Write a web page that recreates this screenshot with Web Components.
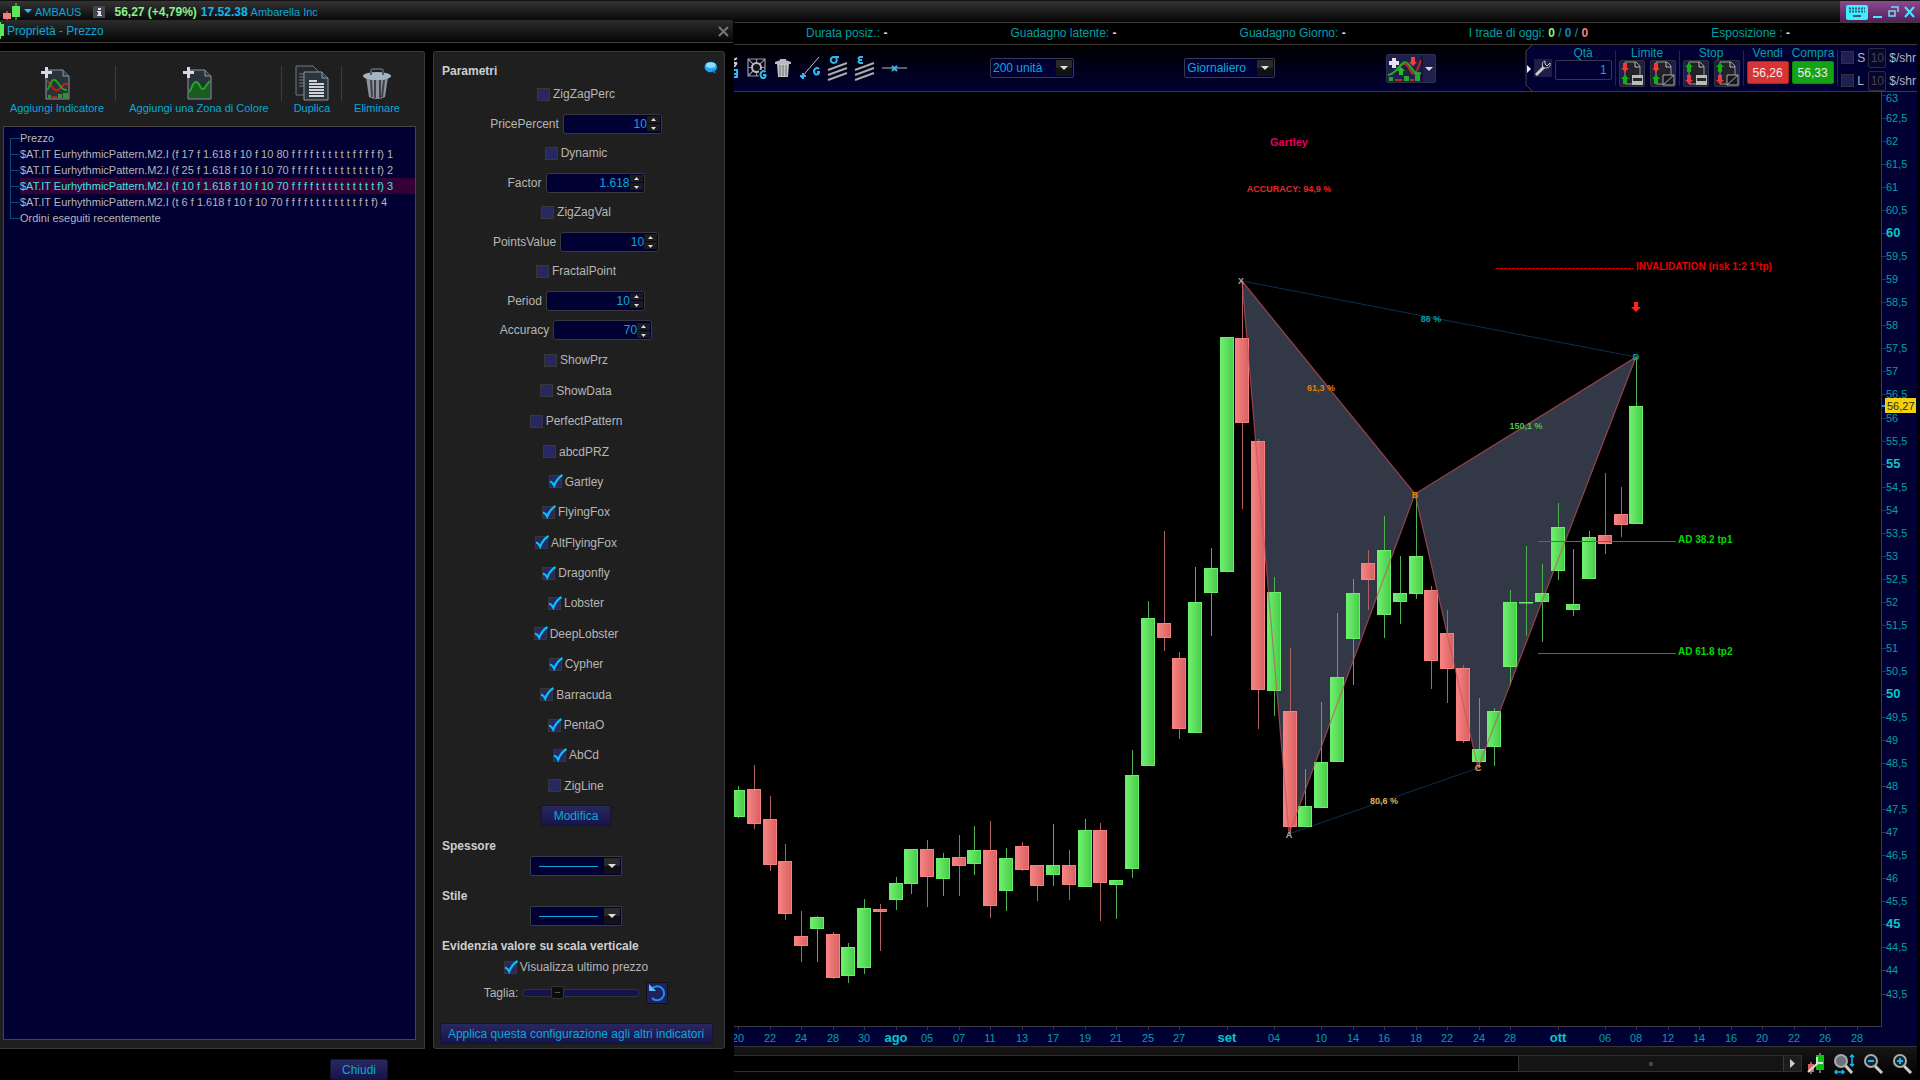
<!DOCTYPE html>
<html lang="it">
<head>
<meta charset="utf-8">
<title>AMBAUS - Ambarella Inc</title>
<style>
  :root {
    --navy: #000033;
    --panel: #1f1f1f;
    --line: #3a3a3a;
    --link: #08a8dc;
    --teal: #00a0a8;
    --grey: #b6b6b6;
  }

  body {
    margin: 0;
    min-height: 100vh;
    display: flex;
    flex-direction: column;
    background: #000;
    color: var(--grey);
    font: 11px/16px "Liberation Sans", Arial, sans-serif;
  }

  main {
    flex: 1;
    display: grid;
    grid-template-columns: 734px minmax(0, 1fr);
    padding-right: 3px;
  }
</style>
</head>
<body>
<title-bar></title-bar>
<main>
  <props-dialog></props-dialog>
  <chart-window></chart-window>
</main>

<script>
class BaseElement extends HTMLElement {
  connectedCallback() {
    if (this.shadowRoot) return;
    const template = document.createElement("template");
    template.innerHTML = `<style>
      *, *::before { box-sizing: border-box; }
      button, input, select { font: inherit; margin: 0; }
      svg { display: block; }
      ${this.styleTemplate}</style>${this.markup}`;
    this.attachShadow({ mode: "open" }).append(template.content.cloneNode(true));
  }

  get styleTemplate() { return ""; }
  get markup() { return ""; }
}

class TitleBar extends BaseElement {
  get styleTemplate() {
    return `
      :host {
        display: flex;
        align-items: center;
        height: 23px;
        border-top: 1px solid #111;
        border-bottom: 1px solid #3c3c3c;
        background: linear-gradient(#343434, #050505);
        color: var(--link);
        box-sizing: border-box;
      }
      .logo { margin: 0 4px 0 2px; }
      .symbol { margin: 0 12px 0 3px; }
      .info { margin-right: 9px; }
      b { font-size: 12px; }
      .quote { color: #8cf08c; margin-right: 4px; }
      .time { color: #10b8f0; margin-right: 3px; }
      .controls {
        margin-left: auto;
        display: flex;
        align-items: center;
        align-self: stretch;
        gap: 5px;
        padding: 0 5px 0 6px;
        background: linear-gradient(#8a4a8e, #54205c);
      }
      button { border: 0; padding: 0; background: none; }
    `;
  }
  get markup() {
    return `
      <svg class="logo" width="18" height="18" viewBox="0 0 18 18">
        <path d="M5 8v10" stroke="#c88"/>
        <path d="M14 0v17" stroke="#5e5"/>
        <path d="M1 10h8v6H1z" fill="#f08080"/>
        <path d="M10 3h8v11h-8z" fill="#5ce65c"/>
      </svg>
      <svg width="8" height="5" viewBox="0 0 8 5"><path d="M0 0h8L4 4z" fill="#20c8ff"/></svg>
      <span class="symbol">AMBAUS</span>
      <svg class="info" width="12" height="13" viewBox="0 0 12 13">
        <path d="M0 1h12v12H0z" fill="#445"/>
        <path d="M5 3h3v2H5zM4 6h4v4h1v1H4v-1h1V7H4z" fill="#ddd"/>
      </svg>
      <b class="quote">56,27 (+4,79%)</b>
      <b class="time">17.52.38</b>
      <span>Ambarella Inc</span>
      <div class="controls">
        <button aria-label="Tastiera"><svg width="22" height="16" viewBox="0 0 22 16">
          <rect y="1" width="22" height="15" rx="2" fill="#3cf0ff"/>
          <path d="M3 4.500h16M3 7.500h16" stroke="#3b5a78" stroke-width="2" stroke-dasharray="2 1"/>
          <path d="M7 12h8" stroke="#3b5a78" stroke-width="2"/>
        </svg></button>
        <button aria-label="Riduci"><svg width="10" height="14" viewBox="0 0 10 14"><path d="M0 11h9v2H0z" fill="#3cf0ff"/></svg></button>
        <button aria-label="Ripristina"><svg width="11" height="12" viewBox="0 0 11 12">
          <path d="M4 1h6v5M3 1h7M1 5h6v5H1z" fill="none" stroke="#6fe0f0" stroke-width="1.500"/>
        </svg></button>
        <button aria-label="Chiudi"><svg width="11" height="12" viewBox="0 0 11 12"><path d="M1 1l9 10M10 1L1 11" stroke="#3cf0ff" stroke-width="2"/></svg></button>
      </div>
    `;
  }
}

class DropDown extends BaseElement {
  get styleTemplate() {
    return `
      :host { display: inline-grid; height: 20px; font-size: 12px; }
      select, svg { grid-area: 1 / 1; }
      select {
        appearance: none;
        width: 100%;
        height: 20px;
        padding: 0 18px 0 2px;
        border: 1px solid #3a3a4a;
        border-radius: 2px;
        background: var(--navy);
        color: var(--link);
        outline: 0;
      }
      select.stroke { background: linear-gradient(#08a8dc, #08a8dc) 8px 9px / 59px 1px no-repeat var(--navy); }
      svg { justify-self: end; margin: 2px; pointer-events: none; }
    `;
  }
  get markup() {
    const text = this.getAttribute("value") || "";
    return `
      <select aria-label="${this.getAttribute("label")}" class="${text ? "" : "stroke"}">
        <option aria-label="${text || "Linea continua"}">${text}</option>
      </select>
      <svg width="16" height="16" viewBox="0 0 16 16">
        <path d="M0 0h16v16H0z" fill="#2a2a2a"/>
        <path d="M0 8h16v8H0z" fill="#121212"/>
        <path d="M4 6h8l-4 4z" fill="#ddd"/>
      </svg>
    `;
  }
}

class ParamCheck extends BaseElement {
  get styleTemplate() {
    return `
      :host { display: block; }
      label {
        display: flex;
        align-items: center;
        justify-content: center;
        gap: 3px;
        height: 20px;
      }
      .box { display: grid; }
      .box > * { grid-area: 1 / 1; }
      input {
        appearance: none;
        width: 13px;
        height: 13px;
        border: 1px solid #383838;
        background: #282860;
      }
      svg { display: none; overflow: visible; pointer-events: none; }
      input:checked + svg { display: block; }
    `;
  }
  get markup() {
    return `
      <label>
        <span class="box">
          <input type="checkbox" ${this.hasAttribute("checked") ? "checked" : ""}>
          <svg width="13" height="13" viewBox="0 0 13 13">
            <path d="M1 6.500C3 7 4 8 5.200 10.500C7 6 10 2 13.500 0" fill="none" stroke="#08c0ff" stroke-width="2.200"/>
          </svg>
        </span>
        <slot></slot>
      </label>
    `;
  }
}

class ParamSpin extends BaseElement {
  get styleTemplate() {
    return `
      :host { display: flex; align-items: center; justify-content: center; gap: 4px; height: 20px; }
      .field {
        display: flex;
        align-items: center;
        width: 99px;
        height: 20px;
        padding: 1px;
        border: 1px solid #38383e;
        border-radius: 3px;
        background: var(--navy);
      }
      input {
        flex: 1;
        min-width: 0;
        padding: 0;
        border: 0;
        outline: 0;
        background: none;
        color: var(--link);
        text-align: right;
      }
      .arrows { display: grid; gap: 1px; }
      button { display: block; padding: 0; border: 0; background: #1c1c1c; }
    `;
  }
  get markup() {
    return `
      <label for="value">${this.getAttribute("label")}</label>
      <div class="field">
        <input id="value" inputmode="decimal" value="${this.getAttribute("value")}">
        <div class="arrows">
          <button aria-label="Aumenta"><svg width="13" height="7" viewBox="0 0 13 7"><path d="M4 5h5L6.500 2z" fill="#ddd"/></svg></button>
          <button aria-label="Diminuisci"><svg width="13" height="7" viewBox="0 0 13 7"><path d="M4 3h5L6.500 6z" fill="#ddd"/></svg></button>
        </div>
      </div>
    `;
  }
}

class PushButton extends BaseElement {
  get styleTemplate() {
    return `
      :host { display: block; }
      button {
        width: 100%;
        height: 21px;
        padding: 0;
        border: 1px solid #14142c;
        border-radius: 2px;
        background: linear-gradient(#282860, #15154a);
        color: var(--link);
      }
    `;
  }
  get markup() { return `<button><slot></slot></button>`; }
}

class ToolAction extends BaseElement {
  get styleTemplate() {
    return `
      :host { display: block; }
      button {
        display: flex;
        flex-direction: column;
        align-items: center;
        width: 100%;
        padding: 0;
        border: 0;
        background: none;
        color: var(--link);
        white-space: nowrap;
        line-height: 16px;
      }
    `;
  }
  get markup() { return `<button><slot name="icon"></slot><slot></slot></button>`; }
}

class PatternTree extends BaseElement {
  get styleTemplate() {
    return `
      :host {
        display: block;
        flex: 1;
        padding: 3px 0 0 6px;
        border: 1px solid #444;
        background: var(--navy);
        overflow: hidden;
      }
      ul { margin: 0; padding: 0; list-style: none; }
      li { display: flex; height: 16px; white-space: nowrap; }
      li::before {
        content: "";
        width: 10px;
        background:
          linear-gradient(#0a4a70, #0a4a70) 0 8px / 10px 1px no-repeat,
          linear-gradient(#0a4a70, #0a4a70) 0 0 / 1px 16px no-repeat;
      }
      li:first-child::before { background-position: 0 8px, 0 8px; }
      li:last-child::before { background-size: 10px 1px, 1px 8px; }
      .selected span { flex: 1; background: #350035; color: #38e4e0; }
    `;
  }
  get markup() {
    const rows = [
      "Prezzo",
      "$AT.IT EurhythmicPattern.M2.I (f 17 f 1.618 f 10 f 10 80 f f f f t t t t t t f f f f f) 1",
      "$AT.IT EurhythmicPattern.M2.I (f 25 f 1.618 f 10 f 10 70 f f f f t t t t t t t t t t f) 2",
      "$AT.IT EurhythmicPattern.M2.I (f 10 f 1.618 f 10 f 10 70 f f f f t t t t t t t t t t f) 3",
      "$AT.IT EurhythmicPattern.M2.I (t 6 f 1.618 f 10 f 10 70 f f f f t t t t t t t t f t f) 4",
      "Ordini eseguiti recentemente"
    ];
    return `<ul>${rows.map((row, i) => `<li class="${i === 3 ? "selected" : ""}"><span>${row}</span></li>`).join("")}</ul>`;
  }
}

class ParamPanel extends BaseElement {
  get styleTemplate() {
    return `
      :host {
        display: flex;
        flex-direction: column;
        align-items: center;
        padding: 9px 11px 4px 5px;
        border: 1px solid var(--line);
        border-radius: 3px;
        background: var(--panel);
        font-size: 12px;
      }
      h2 { margin: 0; width: 100%; padding-left: 3px; font: bold 12px/20px "Liberation Sans", Arial, sans-serif; color: #cecece; }
      .head { display: flex; width: 100%; margin-bottom: 3px; }
      .head svg { margin-right: -5px; }
      .rows { display: flex; flex-direction: column; justify-content: space-between; }
      .values { flex: 256 0 256px; margin-bottom: 10px; }
      .patterns { flex: 445 0 445px; margin-bottom: 9px; }
      .modify { width: 70px; margin-bottom: 10px; }
      .line { width: 92px; margin-bottom: 10px; }
      .scale { margin-bottom: 1px; }
      .size { display: flex; align-items: center; gap: 4px; margin: 5px 0 19px; }
      .size button { margin-left: 2px; padding: 0; width: 22px; height: 22px; border: 1px solid #111; background: #20205c; }
      input[type=range] { appearance: none; width: 118px; height: 16px; background: none; }
      input::-webkit-slider-runnable-track { height: 8px; border: 1px solid #333; border-radius: 4px; background: #14144c; }
      input::-webkit-slider-thumb {
        appearance: none;
        width: 13px;
        height: 13px;
        margin-top: -4px;
        border: 1px solid #333;
        border-radius: 2px;
        background: linear-gradient(#555, #555) center / 5px 1px no-repeat #0c0c0c;
      }
      .apply { width: 273px; }
    `;
  }
  get markup() {
    const patterns = [
      "ShowPrz", "ShowData", "PerfectPattern", "abcdPRZ", "*Gartley", "*FlyingFox", "*AltFlyingFox", "*Dragonfly",
      "*Lobster", "*DeepLobster", "*Cypher", "*Barracuda", "*PentaO", "*AbCd", "ZigLine"
    ];
    const checks = patterns.map(p =>
      `<param-check ${p[0] === "*" ? "checked" : ""}>${p.replace("*", "")}</param-check>`).join("");
    return `
      <div class="head">
        <h2>Parametri</h2>
        <svg width="14" height="14" viewBox="0 0 14 14">
          <ellipse cx="7" cy="6" rx="6.500" ry="5.500" fill="#18a8f8"/>
          <path d="M7 10l5 3-1-4z" fill="#1080d0"/>
          <ellipse cx="7" cy="4" rx="5" ry="3" fill="#90dcff"/>
        </svg>
      </div>
      <div class="rows values">
        <param-check>ZigZagPerc</param-check>
        <param-spin label="PricePercent" value="10"></param-spin>
        <param-check>Dynamic</param-check>
        <param-spin label="Factor" value="1.618"></param-spin>
        <param-check>ZigZagVal</param-check>
        <param-spin label="PointsValue" value="10"></param-spin>
        <param-check>FractalPoint</param-check>
        <param-spin label="Period" value="10"></param-spin>
        <param-spin label="Accuracy" value="70"></param-spin>
      </div>
      <div class="rows patterns">${checks}</div>
      <push-button class="modify">Modifica</push-button>
      <h2>Spessore</h2>
      <drop-down class="line" label="Spessore"></drop-down>
      <h2>Stile</h2>
      <drop-down class="line" label="Stile"></drop-down>
      <h2 class="scale">Evidenzia valore su scala verticale</h2>
      <param-check checked>Visualizza ultimo prezzo</param-check>
      <div class="size">
        <label for="size">Taglia:</label>
        <input id="size" type="range" value="27">
        <button aria-label="Ripristina"><svg width="20" height="20" viewBox="0 0 20 20">
          <path d="M5 5.500A7 7 0 1 1 5 15" fill="none" stroke="#1c90e0" stroke-width="2"/>
          <path d="M2 1v7h7z" fill="#50c0ff"/>
        </svg></button>
      </div>
      <push-button class="apply">Applica questa configurazione agli altri indicatori</push-button>
    `;
  }
}

class PropsDialog extends BaseElement {
  get styleTemplate() {
    return `
      :host {
        display: flex;
        flex-direction: column;
        margin-top: -3px;
        position: relative;
        background: #000;
      }
      header {
        display: flex;
        align-items: center;
        height: 23px;
        width: 733px;
        padding-right: 4px;
        border-bottom: 1px solid #404040;
        background: linear-gradient(#2c2c2c, #050505);
        color: var(--link);
        font-size: 12px;
        gap: 2px;
      }
      header button { margin-left: auto; padding: 0; border: 0; background: none; }
      .panels { flex: 1; display: grid; grid-template-columns: 425px 292px; gap: 8px; padding-top: 8px; }
      .left {
        display: flex;
        flex-direction: column;
        padding: 14px 8px 8px 3px;
        border: 1px solid var(--line);
        border-left: 0;
        border-radius: 0 3px 0 0;
        background: var(--panel);
      }
      .actions { display: grid; grid-template-columns: 98px 146px 40px 50px; gap: 20px; padding-left: 5px; height: 60px; }
      .actions > * { position: relative; }
      .actions > * + *::before {
        content: "";
        position: absolute;
        left: -11px;
        width: 1px;
        height: 35px;
        background: #3c3c3c;
      }
      footer { display: flex; justify-content: center; padding: 10px 16px 0 0; }
      footer push-button { width: 58px; font-size: 12px; }
    `;
  }
  get markup() {
    return `
      <header>
        <svg width="5" height="18" viewBox="0 0 5 18"><path d="M0 2h4v12H0z" fill="#5ce65c"/><path d="M0 0h1v17H0z" fill="#5ce65c"/></svg>
        Proprietà - Prezzo
        <button aria-label="Chiudi"><svg width="11" height="11" viewBox="0 0 11 11"><path d="M1 1l9 9M10 1l-9 9" stroke="#777" stroke-width="2"/></svg></button>
      </header>
      <div class="panels">
        <div class="left">
          <div class="actions">
            <tool-action>
              <svg slot="icon" width="32" height="34" viewBox="0 0 32 34">
                <path d="M5 4h17l6 6v23H5z" fill="#283238" stroke="#8898a4"/>
                <path d="M22 4v6h6" fill="#334048" stroke="#8898a4"/>
                <path d="M6 15c4 2 6 11 11 9s5-9 10-5" fill="none" stroke="#c02020" stroke-width="2"/>
                <path d="M6 24c3-2 4-12 8-10s6 11 12 10" fill="none" stroke="#20a020" stroke-width="2"/>
                <path d="M7 29h3v3H7zM17 28h4v4h-4zM22 27h5v5h-5z" fill="#20a020"/><path d="M11 30h5v2h-5z" fill="#c02020"/>
                <path d="M4 1h3v4h4v3H7v4H4V8H0V5h4z" fill="#d8d8e8"/>
              </svg>Aggiungi Indicatore</tool-action>
            <tool-action>
              <svg slot="icon" width="32" height="34" viewBox="0 0 32 34">
                <path d="M5 4h17l6 6v23H5z" fill="#283238" stroke="#8898a4"/>
                <path d="M22 4v6h6" fill="#334048" stroke="#8898a4"/>
                <path d="M6 26c3-2 3-10 7-10s4 8 7 7 3-5 7-8v17H6z" fill="#185c20"/>
                <path d="M6 26c3-2 3-10 7-10s4 8 7 7 3-5 7-8" fill="none" stroke="#20a828" stroke-width="2"/>
                <path d="M4 1h3v4h4v3H7v4H4V8H0V5h4z" fill="#d8d8e8"/>
              </svg>Aggiungi una Zona di Colore</tool-action>
            <tool-action>
              <svg slot="icon" width="34" height="34" viewBox="0 1 34 34" overflow="visible">
                <path d="M1 1h17l5 5v24H1z" fill="#24282c" stroke="#707880"/>
                <path d="M4 9h7M4 12h7M4 15h7M4 18h7M4 21h7" stroke="#777"/>
                <path d="M9 7h18l6 6v22H9z" fill="#2c343c" stroke="#8898a4"/>
                <path d="M27 7v6h6" fill="#334048" stroke="#8898a4"/>
                <path d="M14 16h8M14 19h15M14 22h15M14 25h15M14 28h15M14 31h15" stroke="#d0d4d8" stroke-width="2"/>
              </svg>Duplica</tool-action>
            <tool-action>
              <svg slot="icon" width="30" height="34" viewBox="0 0 30 34">
                <path d="M4 11h22l-3 20q-8 4-16 0z" fill="#8a929a"/>
                <path d="M9 14l1 17M13 14v18M18 14v18M22 14l-2 17" stroke="#3c4248" stroke-width="2"/>
                <ellipse cx="15" cy="10" rx="14" ry="4" fill="#a4b4c0"/>
                <path d="M9 9V5q0-2 3-2h6q3 0 3 2v4" fill="none" stroke="#505860" stroke-width="2"/>
              </svg>Eliminare</tool-action>
          </div>
          <pattern-tree></pattern-tree>
        </div>
        <param-panel></param-panel>
      </div>
      <footer><push-button>Chiudi</push-button></footer>
    `;
  }
}

class PositionStrip extends BaseElement {
  get styleTemplate() {
    return `
      :host {
        display: flex;
        justify-content: space-between;
        align-items: center;
        height: 22px;
        padding: 0 127px 1px 72px;
        color: var(--teal);
        font-size: 12px;
        border-bottom: 1px solid #3a3a3a;
        box-sizing: border-box;
      }
      b { color: #ddd; }
      .won { color: #8cf08c; }
      .even { color: #1080c0; }
      .lost { color: #f08080; }
    `;
  }
  get markup() {
    return `
      <span>Durata posiz.: <b>-</b></span>
      <span>Guadagno latente: <b>-</b></span>
      <span>Guadagno Giorno: <b>-</b></span>
      <span>I trade di oggi: <b class="won">0</b> / <b class="even">0</b> / <b class="lost">0</b></span>
      <span>Esposizione : <b>-</b></span>
    `;
  }
}

class OrderPanel extends BaseElement {
  get styleTemplate() {
    return `
      :host { display: flex; color: var(--teal); font-size: 12px; background: #000; }
      .body { display: flex; gap: 3px; background: var(--navy); }
      .column { display: grid; grid-template-rows: 14px 27px; padding-top: 1px; text-align: center; line-height: 14px; }
      .pair { display: flex; justify-content: space-between; width: 57px; }
      .rule { width: 1px; height: 36px; margin-top: 5px; background: #26263c; }
      button { padding: 0; border: 1px solid #333; background: #1e1e48; }
      .wrench { align-self: center; height: 18px; border: 0; }
      .pair button { height: 27px; border-radius: 2px; }
      .qty { width: 57px; height: 20px; padding: 0 4px; border: 1px solid #38384c; border-radius: 2px; background: var(--navy); color: var(--link); text-align: right; }
      .sell, .buy { width: 42px; height: 23px; margin-top: 1px; border: 1px solid #a22; border-radius: 2px; background: #d83434; color: #eee; }
      .buy { border-color: #181; background: #12a412; }
      .stops { display: grid; gap: 4px; align-content: center; color: var(--grey); padding: 2px 1px 0 0; }
      .stops > div { display: flex; align-items: center; gap: 3px; height: 19px; }
      .stops input[type=checkbox] { appearance: none; width: 13px; height: 13px; border: 1px solid #333; background: #202050; }
      .stops label { width: 8px; }
      .stops .ticks { width: 18px; height: 20px; padding: 0; border: 1px solid #2c2c40; border-radius: 2px; background: #06062a; color: #444; text-align: center; }
    `;
  }
  orderIcon(top, bottom, slash) {
    const mark = slash
      ? `<path d="M12 14h11v10H12z" fill="#151520" stroke="#aaa"/><path d="M12 24L23 14" stroke="#aaa"/>`
      : `<path d="M12 14h11v10H12z" fill="#bbb"/><path d="M13 17h9v3h-9z" fill="#223"/>`;
    const up = y => `M5 ${y}l4 4H7v5H3v-5H1z`;
    const down = y => `M3 ${y}h4v5h2l-4 4-4-4h2z`;
    const red = "#f03838", green = "#10b010";
    return `<button aria-label="Ordine"><svg width="24" height="25" viewBox="0 0 24 25">
      <path d="M5 1h11l4 4v18H5z" fill="#222228" stroke="#999"/><path d="M15 1v5h5" fill="none" stroke="#bbb"/>
      <path d="${top === "down" ? down(2) : up(2)}" fill="${top === "down" ? red : green}"/>
      <path d="${bottom === "down" ? down(14) : up(14)}" fill="${bottom === "down" ? red : green}"/>${mark}
    </svg></button>`;
  }
  get markup() {
    return `
      <svg width="9" height="46" viewBox="0 0 9 46">
        <path d="M9 0H7L1 6v34l6 6h2z" fill="#000033"/><path d="M7 0L1 6v34l6 6" fill="none" stroke="#444"/>
        <path d="M2 20l4 4-4 4z" fill="#eee"/>
      </svg>
      <div class="body">
        <button class="wrench" aria-label="Impostazioni"><svg width="18" height="18" viewBox="0 0 18 18">
          <path d="M2 16l8-8" stroke="#ccc" stroke-width="3"/><path d="M11 2C7 3 8 9 11 9s6-1 5-5l-3 3-2-2z" fill="#151530" stroke="#ccc"/>
        </svg></button>
        <div class="column"><label for="qty">Qtà</label><input id="qty" class="qty" value="1"></div>
        <span class="rule"></span>
        <div class="column">Limite<div class="pair">${this.orderIcon("down", "up")}${this.orderIcon("down", "up", true)}</div></div>
        <span class="rule"></span>
        <div class="column">Stop<div class="pair">${this.orderIcon("up", "down")}${this.orderIcon("up", "down", true)}</div></div>
        <span class="rule"></span>
        <div class="column">Vendi<button class="sell">56,26</button></div>
        <div class="column">Compra<button class="buy">56,33</button></div>
        <span class="rule"></span>
        <div class="stops">
          <div><input type="checkbox" id="s"><label for="s">S</label><input class="ticks" aria-label="Stop" value="10">$/shr</div>
          <div><input type="checkbox" id="l"><label for="l">L</label><input class="ticks" aria-label="Limite" value="10">$/shr</div>
        </div>
      </div>
    `;
  }
}

class ChartToolbar extends BaseElement {
  get styleTemplate() {
    return `
      :host { display: flex; height: 47px; border-bottom: 1px solid #3a3a3a; background: linear-gradient(#000, #000033); box-sizing: border-box; }
      .tools { display: flex; align-items: center; gap: 6px; }
      .tools button { padding: 0; border: 0; background: none; }
      .middle { flex: 1; display: flex; align-items: center; justify-content: space-between; padding: 0 89px 0 83px; }
      .units { width: 84px; }
      .frame { width: 91px; }
      .add { padding: 0; border: 1px solid #303050; border-radius: 2px; background: #20204c; }
    `;
  }
  get markup() {
    return `
      <div class="tools">
        <button aria-label="Fibonacci"><svg width="5" height="22" viewBox="0 0 5 22"><path d="M0 3l3-2M0 6h3M0 10l3-4" stroke="#ccc" stroke-width="2"/><path d="M0 13h3v7H0M0 17h3" fill="none" stroke="#30b8f0" stroke-width="2"/></svg></button>
        <button aria-label="Griglia"><svg width="22" height="24" viewBox="0 0 22 24">
          <path d="M3 3h17v17H3zM3 3l17 17M20 3L3 20M11.500 3v17M3 11.500h17" fill="none" stroke="#999" stroke-width="1.200"/>
          <circle cx="11.500" cy="11.500" r="4.500" fill="#112" stroke="#bbb" stroke-width="2"/>
          <path d="M14 14h8v10h-8z" fill="#001"/>
          <path d="M20.500 16q-2-2-4 0t0 5.500q3 1.500 4-1v-1.500h-2.500" fill="none" stroke="#30b8f0" stroke-width="2"/>
        </svg></button>
        <button aria-label="Cestino"><svg width="20" height="22" viewBox="0 0 20 22">
          <path d="M4 6h12l-1 14H5z" fill="#c4c4c4"/><path d="M7 8v11M10 8v11M13 8v11" stroke="#666"/>
          <path d="M2 5q8-4 16 0v2H2zM7 2h6v2H7z" fill="#bbb"/>
        </svg></button>
        <button aria-label="Linea"><svg width="22" height="24" viewBox="0 0 22 24">
          <path d="M2 22L20 1" stroke="#bbb"/><path d="M1 20h6M4 17v6" stroke="#30b8f0" stroke-width="2"/>
          <path d="M20 13q-2-2-4 0t0 5q3 1.500 4-1v-1h-2" fill="none" stroke="#30b8f0" stroke-width="2"/>
        </svg></button>
        <button aria-label="Sigma"><svg width="21" height="26" viewBox="0 0 21 26">
          <path d="M1 15l19-7M1 20l19-7M1 25l19-7" stroke="#aaa" stroke-width="2"/>
          <path d="M12 2H7a3 3 0 1 0 2 1" fill="none" stroke="#30b8f0" stroke-width="2"/>
        </svg></button>
        <button aria-label="Epsilon"><svg width="21" height="26" viewBox="0 0 21 26">
          <path d="M1 15l19-7M1 20l19-7M1 25l19-7" stroke="#aaa" stroke-width="2"/>
          <path d="M9 2H6q-3 1 0 3h2-2q-3 2 0 3h3" fill="none" stroke="#30b8f0" stroke-width="2"/>
        </svg></button>
        <button aria-label="Orizzontale"><svg width="26" height="22" viewBox="0 0 26 22">
          <path d="M1 11h25" stroke="#bbb"/><path d="M11 9l5 5M16 9l-5 5" stroke="#30b8f0" stroke-width="2"/>
        </svg></button>
      </div>
      <div class="middle">
        <drop-down class="units" label="Unità" value="200 unità"></drop-down>
        <drop-down class="frame" label="Periodo" value="Giornaliero"></drop-down>
        <button class="add" aria-label="Indicatori"><svg width="48" height="27" viewBox="0 0 48 27">
          <path d="M10 15c6-8 9-8 13 0s7 2 11-10" fill="none" stroke="#c02828" stroke-width="2"/>
          <path d="M1 20c10-1 13-16 19-12s5 12 14 10" fill="none" stroke="#28a828" stroke-width="2"/>
          <path d="M2 22h4v4H2zM17 21h5v5h-5zM28 18h5v8h-5z" fill="#28a828"/><path d="M8 24h7v2H8zM23 24h4v2h-4z" fill="#c02828"/>
          <path d="M5 3h4v3h3v4H9v3H5v-3H2V6h3z" fill="#e4e4ee"/>
          <path d="M24 2h4v5h2l-4 4-4-4h2z" fill="#f04040"/><path d="M14 12l4 4h-2v4h-4v-4h-2z" fill="#20c020"/>
          <path d="M35 0v27" stroke="#08081c"/><path d="M38 12h8l-4 4z" fill="#ddd"/>
        </svg></button>
      </div>
      <order-panel></order-panel>
    `;
  }
}

const UP = "g";
const DOWN = "r";

// direction, body top, body bottom, high, low (canvas units, 46.08 per point)
const CANDLES = [
  [UP, 790, 817, 786, 818], [DOWN, 789, 824, 765, 829], [DOWN, 819, 865, 796, 871], [DOWN, 861, 914, 844, 920],
  [DOWN, 936, 946, 911, 962], [UP, 917, 929, 916, 962], [DOWN, 934, 978, 932, 979], [UP, 947, 976, 943, 983],
  [UP, 908, 968, 899, 974], [DOWN, 909, 912, 904, 951], [UP, 883, 900, 877, 910], [UP, 849, 884, 849, 894],
  [DOWN, 849, 877, 840, 907], [UP, 858, 879, 853, 896], [DOWN, 857, 866, 835, 896], [UP, 850, 864, 826, 875],
  [DOWN, 850, 906, 821, 918], [UP, 858, 891, 848, 911], [DOWN, 846, 870, 842, 871], [DOWN, 865, 886, 865, 901],
  [UP, 865, 875, 824, 886], [DOWN, 865, 885, 850, 900], [UP, 830, 887, 819, 887], [DOWN, 830, 883, 823, 921],
  [UP, 880, 885, 880, 919], [UP, 775, 869, 750, 878], [UP, 618, 766, 601, 766], [DOWN, 623, 638, 531, 651],
  [DOWN, 658, 729, 652, 739], [UP, 602, 733, 567, 733], [UP, 568, 593, 548, 636], [UP, 337, 572, 337, 572],
  [DOWN, 338, 423, 281, 509], [DOWN, 441, 690, 439, 729], [UP, 592, 691, 577, 716], [DOWN, 711, 827, 648, 834],
  [UP, 806, 827, 769, 827], [UP, 762, 808, 702, 808], [UP, 677, 762, 613, 762], [UP, 593, 639, 579, 685],
  [DOWN, 563, 580, 550, 610], [UP, 550, 615, 516, 638], [UP, 593, 602, 556, 624], [UP, 556, 594, 494, 599],
  [DOWN, 590, 661, 586, 689], [DOWN, 633, 669, 610, 703], [DOWN, 668, 741, 665, 743], [UP, 749, 762, 698, 768],
  [UP, 711, 747, 708, 766], [UP, 602, 667, 590, 685], [UP, 602, 603, 546, 636], [UP, 593, 602, 564, 642],
  [UP, 527, 571, 503, 580], [UP, 604, 610, 549, 616], [UP, 537, 579, 531, 579], [DOWN, 535, 544, 473, 554],
  [DOWN, 514, 525, 487, 537], [UP, 406, 524, 357, 524]
];

const DATES = {
  0: "20", 2: "22", 4: "24", 6: "28", 8: "30", 10: "ago", 12: "05", 14: "07", 16: "11", 18: "13", 20: "17", 22: "19",
  24: "21", 26: "25", 28: "27", 31: "set", 34: "04", 37: "10", 39: "14", 41: "16", 43: "18", 45: "22", 47: "24",
  49: "28", 52: "ott", 55: "06", 57: "08", 59: "12", 61: "14", 63: "16", 65: "20", 67: "22", 69: "26", 71: "28"
};

class PriceChart extends BaseElement {
  get styleTemplate() {
    return `
      :host { display: block; flex: 1; min-height: 0; background: #000; }
      svg { width: 100%; height: 100%; }
      text { fill: var(--teal); font-size: 11px; }
      .major { fill: #00c8cc; font-size: 13px; font-weight: bold; }
      .time, .mark { text-anchor: middle; }
      .mark { font-size: 9px; font-weight: bold; }
      .name { font-size: 11px; fill: #e00060; }
      .level { font-size: 10px; font-weight: bold; fill: #00d800; }
      .stop { fill: #e80000; }
      .last { fill: #302800; }
      .tick { stroke: #333; }
      .g { stroke: #50b050; } .r { stroke: #b06060; }
      rect.g { fill: url(#up); stroke: #68f068; } rect.r { fill: url(#down); stroke: #f88080; }
    `;
  }
  x(i) { return Math.round(738 + i * 15.76); }
  y(price) { return 694 - (price - 50) * 46.08; }

  get candles() {
    return CANDLES.map(([dir, top, bottom, high, low], i) => {
      const x = this.x(i);
      return `<path class="${dir}" d="M${x}.500 ${high}V${low}"/>
        <rect class="${dir}" x="${x - 7}.500" y="${top}.500" width="13" height="${Math.max(bottom - top - 1, 0.5)}"/>`;
    }).join("");
  }
  get prices() {
    let out = "";
    for (let p = 43.5; p <= 63; p += 0.5) {
      const y = this.y(p);
      out += `<path class="tick" d="M1882 ${Math.round(y) + 0.5}h4"/>
        <text class="${p % 5 ? "" : "major"}" x="1886" y="${Math.max(y, 98) + 4}">${String(p).replace(".", ",")}</text>`;
    }
    return out;
  }
  get dates() {
    return Object.entries(DATES).map(([i, label]) => {
      const x = this.x(+i);
      return `<path class="tick" d="M${x}.500 1027v3"/>
        <text class="time ${isNaN(label) ? "major" : ""}" x="${x}" y="1042">${label}</text>`;
    }).join("");
  }
  get markup() {
    const mark = (x, y, fill, text) => `<text class="mark" x="${x}" y="${y}" style="fill:${fill}">${text}</text>`;
    return `
      <svg viewBox="734 92 1183 954" preserveAspectRatio="xMinYMin meet">
        <defs>
          <linearGradient id="up"><stop stop-color="#70f070"/><stop offset="1" stop-color="#48cc48"/></linearGradient>
          <linearGradient id="down"><stop stop-color="#f88484"/><stop offset="1" stop-color="#d86060"/></linearGradient>
        </defs>
        <path d="M1882 92h35v954H734v-19h1148z" fill="#000033"/>
        <path d="M1881.500 92v934.500H734" fill="none" stroke="#3a3a44"/>
        <path d="M1242 281L1289 834L1415 494L1478 768L1636 357L1415 494z" fill="#333847"/>
        <path d="M1242 281L1636 357M1289 834L1478 768" stroke="#0a3050"/>
        ${this.candles}
        <path d="M1242 281L1289 834L1415 494L1478 768L1636 357L1415 494z" fill="none" stroke="#c8505c" stroke-opacity="0.7" stroke-width="1.200"/>
        <path d="M1496 268.500h138" stroke="#e00000" stroke-dasharray="3 1"/>
        <path d="M1538 541.500h138M1538 653.500h138" stroke="#00a800"/>
        <path d="M1634 302h4v5h3l-5 5-5-5h3z" fill="#ff2020"/>
        <text class="mark name" x="1289" y="146">Gartley</text>
        ${mark(1289, 192, "#e82828", "ACCURACY: 94,9 %")}
        ${mark(1431, 322, "#00a0b8", "86 %")}
        ${mark(1321, 391, "#e08000", "61,3 %")}
        ${mark(1526, 429, "#50c050", "150,1 %")}
        ${mark(1384, 804, "#e0b050", "80,6 %")}
        ${mark(1241, 284, "#aaa", "X")}
        ${mark(1289, 838, "#aaa", "A")}
        ${mark(1415, 498, "#e08000", "B")}
        ${mark(1478, 771, "#e0b050", "C")}
        ${mark(1636, 360, "#00a0b8", "D")}
        <text class="level stop" x="1636" y="270">INVALIDATION (risk 1:2 1°tp)</text>
        <text class="level" x="1678" y="543">AD 38.2 tp1</text>
        <text class="level" x="1678" y="655">AD 61.8 tp2</text>
        ${this.prices}
        <path d="M1882 406h4" stroke="#08a8dc" stroke-width="2"/>
        <path d="M1885 398h31v15h-31z" fill="#f4d010"/>
        <text class="last" x="1887" y="410">56,27</text>
        ${this.dates}
      </svg>
    `;
  }
}

class ScrollStrip extends BaseElement {
  get styleTemplate() {
    return `
      :host {
        display: flex;
        align-items: center;
        gap: 8px;
        height: 34px;
        padding-right: 4px;
        border-top: 1px solid #333;
        background: linear-gradient(#161616, #000);
        box-sizing: border-box;
      }
      .scroll { flex: 1; display: flex; height: 17px; margin-right: -3px; border: 1px solid #303030; border-left: 0; background: #000; }
      .thumb { width: 265px; margin-left: auto; background: linear-gradient(#444, #444) center / 4px 4px no-repeat #141414; border-left: 1px solid #333; }
      button { padding: 0; border: 0; background: none; }
      .scroll button { width: 18px; border-left: 1px solid #3a3a3a; background: #1c1c1c; }
    `;
  }
  get markup() {
    const lens = sign => `<svg width="21" height="22" viewBox="0 0 21 22">
      <path d="M12 13l7 7" stroke="#ccc" stroke-width="3"/>
      <circle cx="8" cy="8" r="6" fill="#14242c" stroke="#aaa" stroke-width="2"/><path d="${sign}" stroke="#18b8f8" stroke-width="2"/></svg>`;
    return `
      <div class="scroll">
        <div class="thumb"></div>
        <button aria-label="Avanti"><svg width="17" height="15" viewBox="0 0 17 15"><path d="M6 3v9l5-4.500z" fill="#ccc"/></svg></button>
      </div>
      <button aria-label="Stile grafico"><svg width="18" height="22" viewBox="0 0 18 22">
        <path d="M4 9v12M13 0v20" stroke="#ccc"/><path d="M1 11h6v8H1z" fill="#e06060"/><path d="M9 2h8v15H9z" fill="#10c010"/>
        <path d="M1 19l10-9" stroke="#ddd" stroke-width="2"/><path d="M10 4v6h6" fill="none" stroke="#ddd" stroke-width="2"/>
      </svg></button>
      <button aria-label="Adatta"><svg width="22" height="22" viewBox="0 0 22 22">
        <path d="M11 11l8 9" stroke="#ccc" stroke-width="3"/><circle cx="8" cy="8" r="6" fill="#68727c" stroke="#aaa" stroke-width="2"/>
        <path d="M19 2v11M17 4l2-2 2 2M17 11l2 2 2-2M2 19h9M4 17l-2 2 2 2M9 17l2 2-2 2" fill="none" stroke="#18b8f8" stroke-width="1.500"/>
      </svg></button>
      <button aria-label="Riduci">${lens("M5 8h6")}</button>
      <button aria-label="Ingrandisci">${lens("M5 8h6M8 5v6")}</button>
    `;
  }
}

class ChartWindow extends BaseElement {
  get styleTemplate() {
    return `:host { display: flex; flex-direction: column; min-width: 0; }`;
  }
  get markup() {
    return `
      <position-strip></position-strip>
      <chart-toolbar></chart-toolbar>
      <price-chart></price-chart>
      <scroll-strip></scroll-strip>
    `;
  }
}

customElements.define("title-bar", TitleBar);
customElements.define("drop-down", DropDown);
customElements.define("param-check", ParamCheck);
customElements.define("param-spin", ParamSpin);
customElements.define("push-button", PushButton);
customElements.define("tool-action", ToolAction);
customElements.define("pattern-tree", PatternTree);
customElements.define("param-panel", ParamPanel);
customElements.define("props-dialog", PropsDialog);
customElements.define("position-strip", PositionStrip);
customElements.define("order-panel", OrderPanel);
customElements.define("chart-toolbar", ChartToolbar);
customElements.define("price-chart", PriceChart);
customElements.define("scroll-strip", ScrollStrip);
customElements.define("chart-window", ChartWindow);
</script>
</body>
</html>
